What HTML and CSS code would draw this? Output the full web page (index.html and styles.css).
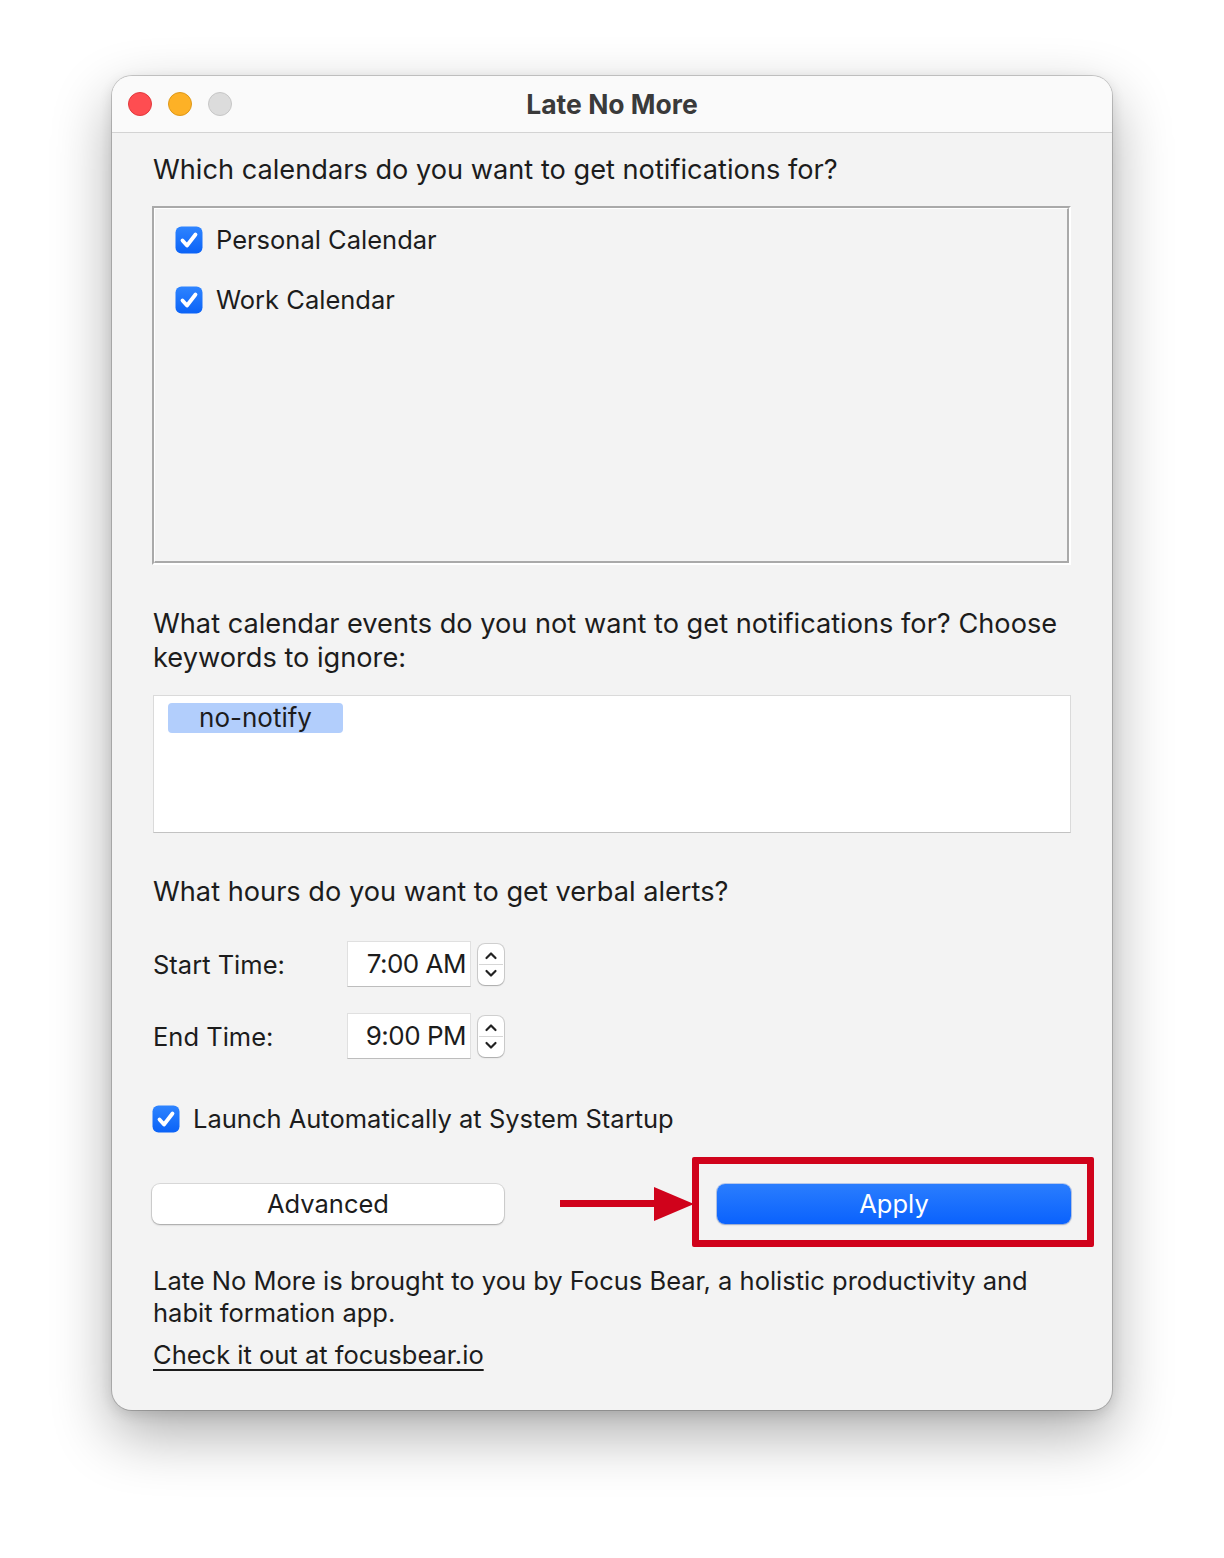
FILE: index.html
```html
<!DOCTYPE html>
<html lang="en">
<head>
<meta charset="utf-8">
<title>Late No More</title>
<link rel="stylesheet" href="styles.css">
</head>
<body>
<div class="window">
  <div class="titlebar">
    <div class="lights">
      <span class="light red"></span>
      <span class="light yellow"></span>
      <span class="light gray"></span>
    </div>
    <div class="title">Late No More</div>
  </div>
  <div class="content">
    <p class="heading h1">Which calendars do you want to get notifications for?</p>
    <div class="groove">
      <div class="groove-inner">
        <label class="check-row">
          <svg class="cb" viewBox="0 0 28 28"><defs><linearGradient id="g1" x1="0" y1="0" x2="0" y2="1"><stop offset="0" stop-color="#2e84ff"/><stop offset="1" stop-color="#0a62f7"/></linearGradient></defs><rect x="0.5" y="0.5" width="27" height="27" rx="6" fill="url(#g1)"/><path d="M7.5 14.5 L12 19.5 L20.5 8.5" fill="none" stroke="#fff" stroke-width="3.8" stroke-linecap="round" stroke-linejoin="round"/></svg>
          <span>Personal Calendar</span>
        </label>
        <label class="check-row">
          <svg class="cb" viewBox="0 0 28 28"><rect x="0.5" y="0.5" width="27" height="27" rx="6" fill="url(#g1)"/><path d="M7.5 14.5 L12 19.5 L20.5 8.5" fill="none" stroke="#fff" stroke-width="3.8" stroke-linecap="round" stroke-linejoin="round"/></svg>
          <span>Work Calendar</span>
        </label>
      </div>
    </div>

    <p class="heading h2">What calendar events do you not want to get notifications for? Choose keywords to ignore:</p>
    <div class="tokenfield">
      <span class="token">no-notify</span>
    </div>

    <p class="heading h3">What hours do you want to get verbal alerts?</p>
    <div class="time-row start">
      <span class="time-label">Start Time:</span>
      <span class="time-field">7:00 AM</span>
      <span class="stepper">
        <svg viewBox="0 0 26 41"><path d="M8.5 14 L13 9.5 L17.5 14" fill="none" stroke="#222" stroke-width="2.2" stroke-linecap="round" stroke-linejoin="round"/><path d="M8.5 27 L13 31.5 L17.5 27" fill="none" stroke="#222" stroke-width="2.2" stroke-linecap="round" stroke-linejoin="round"/></svg>
      </span>
    </div>
    <div class="time-row end">
      <span class="time-label">End Time:</span>
      <span class="time-field">9:00 PM</span>
      <span class="stepper">
        <svg viewBox="0 0 26 41"><path d="M8.5 14 L13 9.5 L17.5 14" fill="none" stroke="#222" stroke-width="2.2" stroke-linecap="round" stroke-linejoin="round"/><path d="M8.5 27 L13 31.5 L17.5 27" fill="none" stroke="#222" stroke-width="2.2" stroke-linecap="round" stroke-linejoin="round"/></svg>
      </span>
    </div>

    <label class="check-row launch">
      <svg class="cb" viewBox="0 0 28 28"><rect x="0.5" y="0.5" width="27" height="27" rx="6" fill="url(#g1)"/><path d="M7.5 14.5 L12 19.5 L20.5 8.5" fill="none" stroke="#fff" stroke-width="3.8" stroke-linecap="round" stroke-linejoin="round"/></svg>
      <span>Launch Automatically at System Startup</span>
    </label>

    <div class="button-row">
      <button class="btn advanced">Advanced</button>
      <div class="arrow">
        <span class="shaft"></span>
        <svg class="head" viewBox="0 0 40 34"><polygon points="0,0 40,17 0,34" fill="#d0021b"/></svg>
      </div>
      <div class="apply-wrap">
        <button class="btn apply">Apply</button>
      </div>
    </div>

    <p class="footer">Late No More is brought to you by Focus Bear, a holistic productivity and habit formation app.</p>
    <a class="link" href="#">Check it out at focusbear.io</a>
  </div>
</div>
</body>
</html>
```

FILE: styles.css
```css
html, body {
  margin: 0;
  padding: 0;
  background: #ffffff;
}
body {
  font-family: "Inter", "Noto Sans", "Liberation Sans", sans-serif;
  color: #1c1c1c;
  padding-top: 76px;
  padding-left: 112px;
  height: 1558px;
  box-sizing: border-box;
  overflow: hidden;
}
.window {
  width: 1000px;
  height: 1334px;
  border-radius: 20px;
  background: #f3f3f3;
  box-shadow: 0 0 0 1px rgba(0,0,0,0.18), 0 24px 60px rgba(0,0,0,0.32), 0 4px 14px rgba(0,0,0,0.12);
  overflow: hidden;
  box-sizing: border-box;
}
.titlebar {
  height: 56px;
  background: #fafafa;
  border-bottom: 1px solid #d3d3d3;
  display: flex;
  align-items: center;
  position: relative;
}
.lights {
  display: flex;
  gap: 16px;
  padding-left: 16px;
}
.light {
  width: 24px;
  height: 24px;
  border-radius: 50%;
  box-sizing: border-box;
}
.light.red { background: #fe4d51; border: 1px solid #e2393d; }
.light.yellow { background: #fdb126; border: 1px solid #de9818; }
.light.gray { background: #dcdcdc; border: 1px solid #c6c6c6; }
.title {
  position: absolute;
  left: 0;
  right: 0;
  text-align: center;
  font-weight: 700;
  font-size: 26.5px;
  color: #3a3a3a;
  pointer-events: none;
}
.content {
  padding: 0 41px 0 41px;
  font-size: 25.5px;
}
.heading {
  margin: 0;
  line-height: 34px;
  font-size: 27.2px;
}
.h1 { margin-top: 20px; margin-bottom: 19px; }
.groove {
  height: 359px;
  box-sizing: border-box;
  border-top: 2px solid #a9a9a9;
  border-left: 2px solid #a9a9a9;
  border-right: 2px solid #ffffff;
  border-bottom: 2px solid #ffffff;
  margin-left: -1px;
}
.groove-inner {
  height: 100%;
  box-sizing: border-box;
  border-top: 1px solid #ffffff;
  border-left: 1px solid #ffffff;
  border-right: 2px solid #a9a9a9;
  border-bottom: 2px solid #a9a9a9;
  padding: 14px 20px;
  display: flex;
  flex-direction: column;
  gap: 26px;
}
.check-row {
  display: flex;
  align-items: center;
  gap: 13px;
  line-height: 34px;
  height: 34px;
}
.cb {
  width: 28px;
  height: 28px;
  flex: none;
}
.h2 { margin-top: 42px; margin-bottom: 20px; }
.tokenfield {
  height: 138px;
  box-sizing: border-box;
  background: #ffffff;
  border: 1px solid #dadada;
  border-bottom-color: #c2c2c2;
  padding: 6px 14px;
}
.token {
  display: inline-block;
  width: 175px;
  height: 30px;
  line-height: 30px;
  text-align: center;
  background: #b2cefc;
  border-radius: 4px;
  font-size: 26px;
}
.h3 { margin-top: 42px; margin-bottom: 32px; }
.time-row {
  display: flex;
  align-items: center;
  height: 46px;
}
.time-row.end { margin-top: 26px; }
.time-label {
  width: 194px;
  flex: none;
}
.time-field {
  width: 124px;
  height: 46px;
  box-sizing: border-box;
  background: #ffffff;
  border: 1px solid #e0e0e0;
  border-bottom-color: #bdbdbd;
  text-align: right;
  padding-right: 4px;
  line-height: 44px;
  font-size: 26px;
  letter-spacing: -0.5px;
}
.stepper {
  margin-left: 7px;
  width: 26px;
  height: 41px;
  box-sizing: border-box;
  background: #ffffff;
  border-radius: 7px;
  box-shadow: 0 0 0 1px rgba(0,0,0,0.14), 0 1px 1.5px rgba(0,0,0,0.18);
  position: relative;
  display: block;
}
.stepper::after {
  content: "";
  position: absolute;
  left: 1px;
  right: 1px;
  top: 20px;
  height: 1px;
  background: #d6d6d6;
}
.stepper svg {
  width: 26px;
  height: 41px;
  display: block;
}
.launch {
  margin-top: 43px;
  margin-left: -1px;
}
.button-row {
  margin-top: 47px;
  display: flex;
  align-items: center;
  height: 41px;
  position: relative;
}
.btn {
  font-family: inherit;
  font-size: 25.5px;
  height: 40px;
  border-radius: 8px;
  border: none;
  padding: 0;
  cursor: default;
}
.advanced {
  width: 352px;
  margin-left: -1px;
  background: #ffffff;
  color: #1c1c1c;
  box-shadow: 0 0 0 1px rgba(0,0,0,0.1), 0 1px 2px rgba(0,0,0,0.25);
}
.arrow {
  margin-left: 56px;
  width: 134px;
  height: 34px;
  display: flex;
  align-items: center;
}
.shaft {
  width: 96px;
  height: 7px;
  background: #d0021b;
}
.head {
  width: 40px;
  height: 34px;
  margin-left: -2px;
  display: block;
}
.apply-wrap {
  margin-left: auto;
  position: relative;
}
.apply-wrap::before {
  content: "";
  position: absolute;
  left: -25px;
  right: -23px;
  top: -27px;
  bottom: -23px;
  border: 7px solid #d0021b;
  border-radius: 2px;
  pointer-events: none;
}
.apply {
  width: 354px;
  display: block;
  color: #ffffff;
  background: linear-gradient(#2a7dfe, #0a62fd);
  box-shadow: 0 0 0 1px rgba(10,80,220,0.25), 0 1px 2px rgba(0,0,0,0.2);
}
.footer {
  margin: 41px 0 0 0;
  line-height: 32px;
}
.link {
  display: inline-block;
  margin-top: 10px;
  line-height: 32px;
  color: #1c1c1c;
  text-decoration: underline;
  text-underline-offset: 5px;
  text-decoration-thickness: 2px;
}
```
